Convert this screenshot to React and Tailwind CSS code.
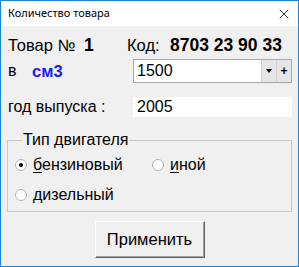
import { X } from 'lucide-react';

const font = { fontFamily: '"Liberation Sans", Arial, sans-serif' };

const Radio = ({ checked, label, hot }) => (
  <label className="flex items-center gap-[6px] h-[20px]">
    <span className="w-[12px] h-[12px] rounded-full bg-white border border-[#b4b4b4] flex items-center justify-center shrink-0">
      {checked && <span className="w-[4px] h-[4px] rounded-full bg-black" />}
    </span>
    <span>
      <span className="underline underline-offset-2">{hot}</span>
      {label}
    </span>
  </label>
);

export default function App() {
  return (
    <div
      className="w-[299px] h-[267px] border border-[#1883d7] bg-[#f0f0f0] flex flex-col text-black"
      style={font}
    >
      {/* Title bar */}
      <div className="h-[25px] bg-white flex items-center justify-between pl-[7px] pr-[6px]">
        <span
          className="text-[11px]"
          style={{ fontFamily: '"Noto Sans", "Open Sans", sans-serif' }}
        >
          Количество товара
        </span>
        <X className="w-[16px] h-[16px]" strokeWidth={1.2} />
      </div>

      {/* Body */}
      <div className="flex-1 px-[6px] pt-[8px] flex flex-col text-[16px]">
        <div className="h-[22px] flex items-center pl-[1px]">
          <span className="w-[76px] text-[16.5px]">Товар №</span>
          <span className="font-bold text-[17.5px] w-[43px]">1</span>
          <span className="w-[43px] text-[16.5px]">Код:</span>
          <span className="font-bold text-[17.5px]">8703 23 90 33</span>
        </div>

        <div className="h-[24px] mt-[3px] flex items-center">
          <span className="w-[126px] pl-[1px] flex items-center">
            <span className="w-[24px]">в</span>
            <span className="font-bold text-[#1a1aff] text-[16.5px]">см3</span>
          </span>
          <div className="flex-1 h-[24px] border border-[#a8a8a8] bg-white flex items-center">
            <span className="flex-1 pl-[3px]">1500</span>
            <span className="w-[15px] h-[22px] bg-[#e6e6e6] border-l border-[#d0d0d0] flex items-center justify-center">
              <span className="w-0 h-0 border-l-[3px] border-r-[3px] border-t-[4px] border-l-transparent border-r-transparent border-t-black" />
            </span>
            <span className="w-[15px] h-[22px] bg-[#e6e6e6] border-l border-[#d0d0d0] flex items-center justify-center font-bold text-[12px] leading-none">
              +
            </span>
          </div>
        </div>

        <div className="h-[20px] mt-[14px] flex items-center">
          <span className="w-[126px] pl-[1px]">год выпуска :</span>
          <div className="flex-1 h-[20px] bg-white flex items-center pl-[4px]">2005</div>
        </div>

        <fieldset className="mt-[13px] border border-[#c8c8c8] h-[82px] pl-[7px] pt-[5px]">
          <legend className="ml-[7px] px-[1px] leading-[20px]">Тип двигателя</legend>
          <div className="flex">
            <div className="w-[137px]">
              <Radio checked hot="б" label="ензиновый" />
            </div>
            <Radio hot="и" label="ной" />
          </div>
          <div className="mt-[10px]">
            <Radio hot="д" label="изельный" />
          </div>
        </fieldset>

        <div className="flex justify-center mt-[9px]">
          <button className="w-[110px] h-[37px] bg-[#f0f0f0] border border-t-white border-l-white border-r-[#646464] border-b-[#646464] shadow-[inset_-1px_-1px_0_#a0a0a0] text-[16.5px]">
            Применить
          </button>
        </div>
      </div>
    </div>
  );
}
